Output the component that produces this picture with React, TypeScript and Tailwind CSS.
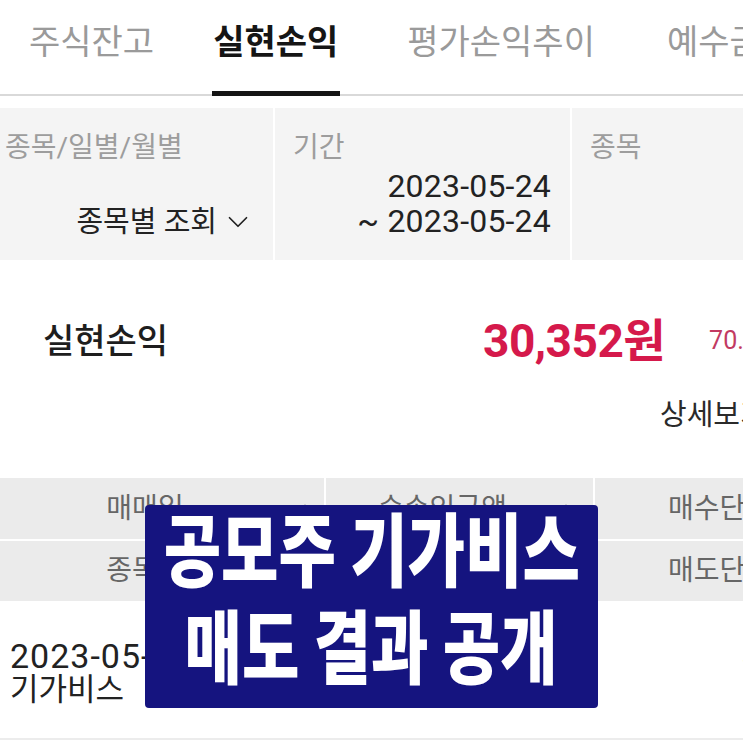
import { ChevronDown } from 'lucide-react'

const tabs = [
  { label: '주식잔고', ml: 'ml-[29px]', active: false },
  { label: '실현손익', ml: 'ml-[59px]', active: true },
  { label: '평가손익추이', ml: 'ml-[69px]', active: false },
  { label: '예수금', ml: 'ml-[72px]', active: false },
]

function SortArrow() {
  return (
    <svg width="14" height="9" viewBox="0 0 14 9" className="shrink-0">
      <path d="M7 0 L14 9 L0 9 Z" fill="#a3a3a3" />
    </svg>
  )
}

export default function App() {
  return (
    <div className="relative h-[743px] w-[743px] overflow-hidden bg-white font-['Roboto','Noto_Sans_CJK_KR',sans-serif] text-[#222]">
      {/* tabs */}
      <div className="relative flex h-[96px] whitespace-nowrap border-b-2 border-[#d9d9d9]">
        {tabs.map((t) => (
          <div key={t.label} className={`relative shrink-0 ${t.ml}`}>
            <div
              className={
                t.active
                  ? 'pt-[19px] text-[34px] leading-[46px] font-bold text-[#151515]'
                  : 'pt-[19px] text-[34px] leading-[46px] text-[#9a9a9a]'
              }
            >
              {t.label}
            </div>
            {t.active && <div className="absolute bottom-[-2px] left-[-1px] h-[5px] w-[128px] bg-[#141414]" />}
          </div>
        ))}
      </div>

      {/* filters */}
      <div className="mt-[12px] grid h-[152px] grid-cols-[275px_297px_1fr] divide-x-2 divide-white bg-[#f4f4f4] whitespace-nowrap">
        <div className="flex flex-col">
          <div className="pt-[22px] pl-[5px] text-[28px] leading-[36px] text-[#9d9d9d]">종목/일별/월별</div>
          <div className="mt-[38px] flex items-center justify-end gap-[4px] pr-[18px] text-[29px] leading-[36px] text-[#222]">
            <span>종목별 조회</span>
            <ChevronDown className="h-[34px] w-[34px]" strokeWidth={1.2} />
          </div>
        </div>
        <div className="flex flex-col">
          <div className="pt-[22px] pl-[18px] text-[28px] leading-[36px] text-[#9d9d9d]">기간</div>
          <div className="mt-[3px] pr-[19px] text-right text-[32px] leading-[35px] tracking-[0.2px] text-[#222]">
            <div>2023-05-24</div>
            <div>~ 2023-05-24</div>
          </div>
        </div>
        <div className="pt-[22px] pl-[18px] text-[28px] leading-[36px] text-[#9d9d9d]">종목</div>
      </div>

      {/* summary */}
      <div className="mt-[56px] flex h-[50px] items-center whitespace-nowrap pl-[43px]">
        <div className="w-[440px] shrink-0 text-[34px] font-medium text-[#1e1e1e]">실현손익</div>
        <div className="shrink-0 text-[46px] font-bold tracking-[-0.5px] text-[#d5194b]">30,352원</div>
        <div className="ml-[44px] shrink-0 text-[25px] text-[#c23a62]">70.21%</div>
      </div>
      <div className="mt-[29px] pl-[660px] text-[29px] leading-[40px] whitespace-nowrap text-[#2a2a2a]">상세보기</div>

      {/* table header */}
      <div className="mt-[43px] grid grid-cols-[324px_267px_1fr] gap-[2px] bg-white whitespace-nowrap text-[28px] text-[#666]">
        <div className="flex h-[61px] items-center bg-[#ebebeb] pr-[12px]">
          <span className="flex-1 pr-[8px] text-center">매매일</span>
          <SortArrow />
        </div>
        <div className="flex h-[61px] items-center bg-[#ebebeb] pr-[20px]">
          <span className="flex-1 text-center">순손익금액</span>
          <SortArrow />
        </div>
        <div className="flex h-[61px] items-center bg-[#ebebeb] pl-[73px]">매수단가</div>
        <div className="flex h-[60px] items-center bg-[#ebebeb] pr-[34px]">
          <span className="flex-1 text-center">종목명</span>
        </div>
        <div className="flex h-[60px] items-center bg-[#ebebeb] pr-[34px]">
          <span className="flex-1 text-center">수익률</span>
        </div>
        <div className="flex h-[60px] items-center bg-[#ebebeb] pl-[73px]">매도단가</div>
      </div>

      {/* data row */}
      <div className="mt-[1px] flex h-[138px] border-b-2 border-[#ececec] whitespace-nowrap">
        <div className="w-[595px] shrink-0 pt-[37px] pl-[10px] text-[31px] leading-[34px] text-[#222]">
          <div className="text-[34px] tracking-[1px]">2023-05-24</div>
          <div>기가비스</div>
        </div>
        <div className="pt-[37px] pl-[147px] text-[31px] leading-[34px]">
          <div className="text-[#222]">31,000</div>
          <div className="text-[26px] text-[#999]">52,900</div>
        </div>
      </div>

      {/* thumbnail caption overlay */}
      <div className="absolute top-[505px] left-[145px] flex h-[203px] w-[453px] flex-col items-center justify-center rounded-[4px] bg-[#15147f] pb-[26px] text-white">
        <div className="scale-x-[0.78] text-[80px] leading-[97px] font-black whitespace-nowrap font-['Noto_Sans_CJK_KR',sans-serif]">
          공모주 기가비스
        </div>
        <div className="scale-x-[0.78] text-[80px] leading-[97px] font-black whitespace-nowrap font-['Noto_Sans_CJK_KR',sans-serif]">
          매도 결과 공개
        </div>
      </div>
    </div>
  )
}
